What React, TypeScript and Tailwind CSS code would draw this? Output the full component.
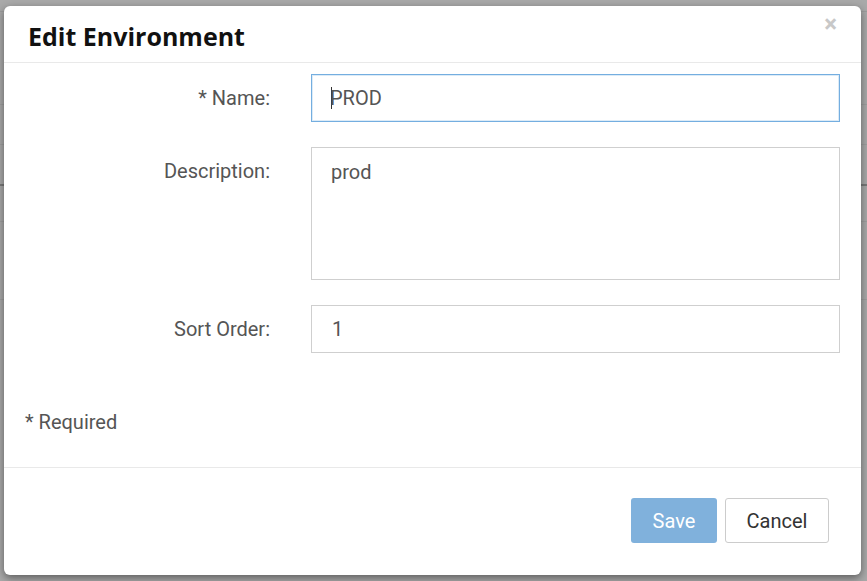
import React from "react";

const font = { fontFamily: "Roboto, 'Liberation Sans', Arial, sans-serif" };

function Field({ label, children }: { label: string; children: React.ReactNode }) {
  return (
    <div className="flex items-start">
      <div className="w-[266px] shrink-0 pr-0 text-right text-[20px] leading-[48px] text-[#555]">{label}</div>
      <div className="ml-[41px] flex-1">{children}</div>
    </div>
  );
}

export default function App() {
  return (
    <div className="relative h-[581px] w-[867px] overflow-hidden bg-[#a9a9a9]" style={font}>
      <div className="flex h-full flex-col">
        <div className="h-[12px] border-b border-[#9c9c9c]" />
        <div className="h-[93px] border-b border-[#9e9e9e]" />
        <div className="h-[40px] border-b border-[#9e9e9e]" />
        <div className="h-[41px] border-b-2 border-[#7a7a7a]" />
        <div className="h-[36px] border-b border-[#9e9e9e]" />
        <div className="h-[78px] border-b border-[#9e9e9e]" />
      </div>
      <div className="absolute left-[4px] top-[6px] flex h-[569px] w-[857px] flex-col rounded-[6px] bg-white shadow-[0_3px_9px_rgba(0,0,0,0.45)]">
        <div className="flex h-[57px] items-start justify-between border-b border-[#e9e9e9] pl-[24px] pr-[24px]">
          <div
            className="pt-[14px] text-[25px] font-bold leading-[32px] text-[#111]"
            style={{ fontFamily: "'Open Sans', 'Noto Sans', sans-serif" }}
          >
            Edit Environment
          </div>
          <div className="pt-[2px] text-[24px] font-bold leading-[32px] text-[#c8c8c8]">×</div>
        </div>
        <div className="flex flex-1 flex-col pt-[11px] pr-[21px]">
          <div className="flex flex-col gap-[25px]">
            <Field label="* Name:">
              <div className="flex h-[48px] items-center border border-[#74aee0] pl-[19px] text-[20px] text-[#555] shadow-[inset_0_0_0_1px_rgba(116,174,224,0.25)]">
                <span className="-mr-[2px] inline-block h-[22px] w-[1px] bg-[#333]" />
                PROD
              </div>
            </Field>
            <Field label="Description:">
              <div className="h-[133px] border border-[#cfcfcf] pl-[19px] pt-[10px] text-[20px] leading-[28px] text-[#555]">
                prod
              </div>
            </Field>
            <Field label="Sort Order:">
              <div className="flex h-[48px] items-center border border-[#cfcfcf] pl-[20px] text-[20px] text-[#555]">1</div>
            </Field>
          </div>
          <div className="mt-[55px] pl-[21px] text-[20px] leading-[28px] text-[#555]">* Required</div>
        </div>
        <div className="flex h-[108px] items-start justify-end gap-[8px] border-t border-[#e9e9e9] pr-[32px] pt-[30px]">
          <button className="h-[45px] w-[86px] rounded-[3px] bg-[#80b1dc] text-[20px] text-white">Save</button>
          <button className="h-[45px] w-[104px] rounded-[3px] border border-[#cccccc] bg-white text-[20px] text-[#333]">
            Cancel
          </button>
        </div>
      </div>
    </div>
  );
}
